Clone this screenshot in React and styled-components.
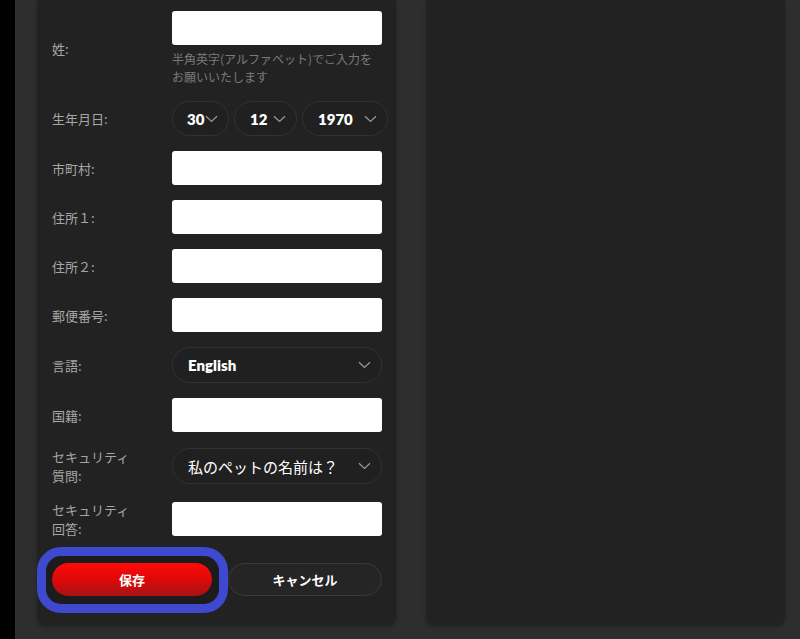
import styled, { createGlobalStyle } from 'styled-components';

const GlobalStyle = createGlobalStyle`
  html, body {
    margin: 0;
    padding: 0;
    background: #2e2e2e;
    overflow: hidden;
  }

  * {
    box-sizing: border-box;
  }
`;

const Page = styled.div`
  display: flex;
  height: 639px;
  background: #2e2e2e;
  font-family: "Noto Sans CJK JP", "Noto Sans", sans-serif;
`;

const SideStrip = styled.div`
  width: 15px;
  flex-shrink: 0;
  background: #000;
`;

const Columns = styled.div`
  flex: 1;
  display: grid;
  grid-template-columns: 359px 359px;
  gap: 30px;
  padding: 0 15px 14px 22px;
`;

const Card = styled.div`
  background: #222222;
  border-radius: 0 0 8px 8px;
  box-shadow: 0 2px 4px rgba(0, 0, 0, 0.25);
`;

const Form = styled.form`
  display: flex;
  flex-direction: column;
  gap: 15px;
  padding: 11px 14px 29px 15px;
`;

const Row = styled.div`
  display: flex;
  align-items: center;
`;

const Label = styled.label`
  width: 120px;
  flex-shrink: 0;
  padding-right: 36px;
  font-size: 13px;
  line-height: 19px;
  color: #a6a6a6;
`;

const Field = styled.div`
  width: 210px;
  display: flex;
  flex-direction: column;
`;

const TextInput = styled.input`
  width: 210px;
  height: 34px;
  border: none;
  border-radius: 3px;
  background: #fff;
  padding: 0 10px;
  outline: none;
`;

const Hint = styled.p`
  margin: 5px 0 0;
  font-size: 12px;
  line-height: 18px;
  color: #7a7a7a;
`;

const DateRow = styled.div`
  display: flex;
  gap: 5px;
  width: 220px;
`;

const Select = styled.div`
  display: flex;
  align-items: center;
  justify-content: space-between;
  width: ${(p) => p.$width || 210}px;
  height: ${(p) => p.$height || 36}px;
  flex-shrink: 0;
  padding: 0 10px 0 ${(p) => p.$padLeft || 15}px;
  border: 1px solid #323232;
  border-radius: 18px;
  background: #202020;
  color: #fff;
  font-family: ${(p) => (p.$jp ? '"Noto Sans CJK JP", sans-serif' : 'Lato, "Noto Sans", sans-serif')};
  font-size: 15px;
  font-weight: ${(p) => (p.$jp ? 400 : 800)};
  white-space: nowrap;
`;

const Chevron = () => (
  <svg width="13" height="8" viewBox="0 0 13 8" fill="none">
    <path d="M1 1.2 L6.5 6.5 L12 1.2" stroke="#9a9a9a" strokeWidth="1.2" />
  </svg>
);

const Buttons = styled.div`
  position: relative;
  z-index: 0;
  display: flex;
  gap: 16px;
  margin-top: 10px;
`;

const SaveButton = styled.button`
  position: relative;
  width: 160px;
  height: 33px;
  border: none;
  border-radius: 17px;
  background: linear-gradient(180deg, #ff0a0a 0%, #e20808 45%, #a81313 100%);
  color: #fff;
  font-family: "Noto Sans CJK JP", sans-serif;
  font-size: 13px;
  font-weight: 700;
  cursor: pointer;

  /* keyboard focus ring */
  &::before {
    content: "";
    position: absolute;
    inset: -16px -16px -17px -15px;
    z-index: -1;
    border: 9px solid #3e49cf;
    border-radius: 24px;
    background: #1c1c1c;
  }
`;

const CancelButton = styled.button`
  width: 154px;
  height: 33px;
  border: 1px solid #3a3a3a;
  border-radius: 17px;
  background: #252525;
  color: #fff;
  font-family: "Noto Sans CJK JP", sans-serif;
  font-size: 13px;
  font-weight: 700;
  cursor: pointer;
`;

const textRows = ['市町村:', '住所１:', '住所２:', '郵便番号:'];

const App = () => (
  <>
    <GlobalStyle />
    <Page>
      <SideStrip />
      <Columns>
        <Card>
          <Form onSubmit={(e) => e.preventDefault()}>
            <Row>
              <Label>姓:</Label>
              <Field>
                <TextInput />
                <Hint>半角英字(アルファベット)でご入力をお願いいたします</Hint>
              </Field>
            </Row>

            <Row>
              <Label>生年月日:</Label>
              <DateRow>
                <Select $width={57} $height={35} $padLeft={14}>30<Chevron /></Select>
                <Select $width={63} $height={35}>12<Chevron /></Select>
                <Select $width={86} $height={35}>1970<Chevron /></Select>
              </DateRow>
            </Row>

            {textRows.map((label) => (
              <Row key={label}>
                <Label>{label}</Label>
                <TextInput />
              </Row>
            ))}

            <Row>
              <Label>言語:</Label>
              <Select>English<Chevron /></Select>
            </Row>

            <Row>
              <Label>国籍:</Label>
              <TextInput />
            </Row>

            <Row>
              <Label>セキュリティ質問:</Label>
              <Select $jp>私のペットの名前は？<Chevron /></Select>
            </Row>

            <Row>
              <Label>セキュリティ回答:</Label>
              <TextInput />
            </Row>

            <Buttons>
              <SaveButton type="submit">保存</SaveButton>
              <CancelButton type="button">キャンセル</CancelButton>
            </Buttons>
          </Form>
        </Card>
        <Card />
      </Columns>
    </Page>
  </>
);

export default App;
